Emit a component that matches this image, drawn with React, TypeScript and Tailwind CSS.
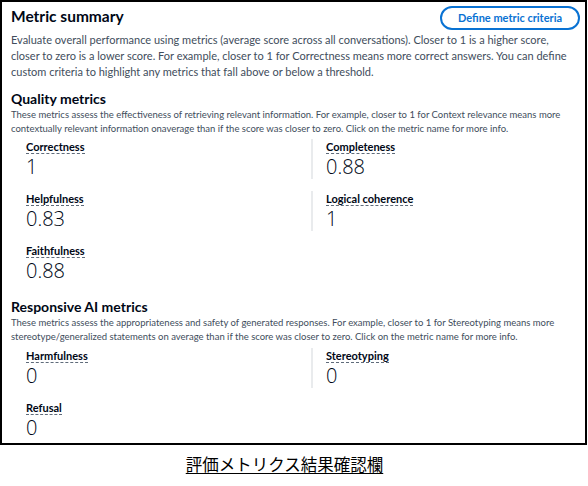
const font = { fontFamily: 'Lato, "Noto Sans", sans-serif' };
const valueFont = { fontFamily: '"Open Sans", "Noto Sans", sans-serif' };

type Metric = { name: string; value: string };

function MetricItem({ metric, divider }: { metric: Metric; divider: boolean }) {
  return (
    <div className={divider ? 'border-l-2 border-[#e9ebed] pl-[13px]' : ''}>
      <div className="h-[16px] text-[11px] leading-[16px] font-bold text-[#000716]">
        <span className="border-b border-dashed border-[#5f6b7a]">{metric.name}</span>
      </div>
      <div className="h-[24px] text-[20px] leading-[24px] font-light text-[#000716]" style={valueFont}>
        {metric.value}
      </div>
    </div>
  );
}

function MetricGrid({ rows }: { rows: Metric[][] }) {
  return (
    <div className="grid grid-cols-[285px_1fr] gap-y-[12px] pl-[15px]">
      {rows.map((row, i) =>
        [0, 1].map((c) =>
          row[c] ? (
            <MetricItem key={`${i}-${c}`} metric={row[c]} divider={c === 1} />
          ) : (
            <div key={`${i}-${c}`} />
          ),
        ),
      )}
    </div>
  );
}

function Lines({ lines, className }: { lines: string[]; className: string }) {
  return (
    <div className={className}>
      {lines.map((l) => (
        <div key={l} className="whitespace-nowrap">
          {l}
        </div>
      ))}
    </div>
  );
}

export default function App() {
  return (
    <div className="w-[588px] h-[486px] bg-white overflow-hidden" style={font}>
      <div className="w-[587px] h-[445px] border-2 border-black pl-[9px] pr-[5px] pt-[2px] overflow-hidden">
        <div className="flex items-start justify-between">
          <h2 className="text-[15.5px] leading-[24px] font-bold text-[#000716]">Metric summary</h2>
          <button className="mt-[2px] h-[24px] w-[140px] rounded-full border-2 border-[#0972d3] text-[#0972d3] text-[11px] font-bold leading-[20px]">
            Define metric criteria
          </button>
        </div>
        <Lines
          className="text-[11px] leading-[16px] text-[#414d5c] mt-[2px]"
          lines={[
            'Evaluate overall performance using metrics (average score across all conversations). Closer to 1 is a higher score,',
            'closer to zero is a lower score. For example, closer to 1 for Correctness means more correct answers. You can define',
            'custom criteria to highlight any metrics that fall above or below a threshold.',
          ]}
        />

        <h3 className="mt-[10px] text-[14px] leading-[18px] font-bold text-[#000716]">Quality metrics</h3>
        <Lines
          className="text-[9.5px] leading-[14px] text-[#414d5c]"
          lines={[
            'These metrics assess the effectiveness of retrieving relevant information. For example, closer to 1 for Context relevance means more',
            'contextually relevant information onaverage than if the score was closer to zero. Click on the metric name for more info.',
          ]}
        />
        <div className="mt-[3px]">
          <MetricGrid
            rows={[
              [
                { name: 'Correctness', value: '1' },
                { name: 'Completeness', value: '0.88' },
              ],
              [
                { name: 'Helpfulness', value: '0.83' },
                { name: 'Logical coherence', value: '1' },
              ],
              [{ name: 'Faithfulness', value: '0.88' }],
            ]}
          />
        </div>

        <h3 className="mt-[15px] text-[14px] leading-[18px] font-bold text-[#000716]">Responsive AI metrics</h3>
        <Lines
          className="text-[9.5px] leading-[14px] text-[#414d5c]"
          lines={[
            'These metrics assess the appropriateness and safety of generated responses. For example, closer to 1 for Stereotyping means more',
            'stereotype/generalized statements on average than if the score was closer to zero. Click on the metric name for more info.',
          ]}
        />
        <div className="mt-[4px]">
          <MetricGrid
            rows={[
              [
                { name: 'Harmfulness', value: '0' },
                { name: 'Stereotyping', value: '0' },
              ],
              [{ name: 'Refusal', value: '0' }],
            ]}
          />
        </div>
      </div>
      <div className="flex justify-center pt-[7px]">
        <span
          className="text-[16.5px] leading-[24px] text-black underline underline-offset-2 mr-[19px]"
          style={{ fontFamily: '"Noto Sans CJK JP", sans-serif' }}
        >
          評価メトリクス結果確認欄
        </span>
      </div>
    </div>
  );
}
